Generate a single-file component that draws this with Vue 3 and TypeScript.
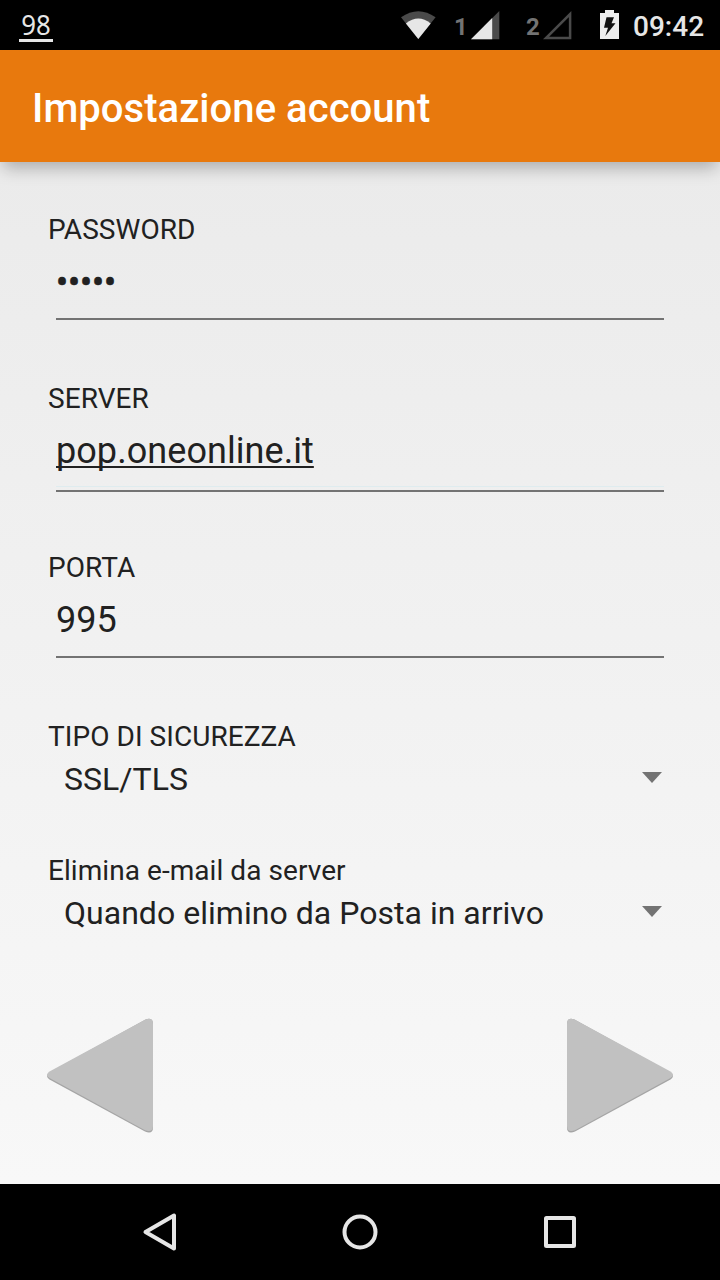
<script setup lang="ts">
interface FormField {
  id: string
  label: string
  value: string
}

const textFields: FormField[] = [
  { id: 'password', label: 'PASSWORD', value: '•••••' },
  { id: 'server', label: 'SERVER', value: 'pop.oneonline.it' },
  { id: 'port', label: 'PORTA', value: '995' },
]

const selectFields: FormField[] = [
  { id: 'security', label: 'TIPO DI SICUREZZA', value: 'SSL/TLS' },
  { id: 'delete', label: 'Elimina e-mail da server', value: 'Quando elimino da Posta in arrivo' },
]
</script>

<template>
  <div class="screen">
    <header class="status">
      <span class="battery-level"><span class="digits">98</span></span>
      <div class="status-icons">
        <svg class="wifi" width="36" height="30" viewBox="0 0 36 30">
          <path d="M0 7.3Q17.3-4.7 34.6 7.3L17.3 29Z" fill="#4a4a4a" />
          <path d="M4.900 13.4Q17.3 3.4 29.700 13.4L17.3 29Z" fill="#e6e6e6" />
        </svg>
        <span class="sim sim-one">1</span>
        <svg class="signal" width="29" height="30" viewBox="0 0 29 30">
          <path d="M28.3 1V29.3H0Z" fill="#4a4a4a" />
          <path d="M21.2 8.1V29.3H0Z" fill="#e6e6e6" />
        </svg>
        <span class="sim sim-two">2</span>
        <svg class="signal" width="29" height="30" viewBox="0 0 29 30">
          <path d="M27.100 4V28.100H3Z" fill="none" stroke="#4a4a4a" stroke-width="2.500" />
        </svg>
        <svg class="battery" width="19" height="30" viewBox="0 0 19 30">
          <path d="M5 0h9v3h5v26H0V3h5Z" fill="#ededed" />
          <path d="M6.500 7.300H14L11.500 13.200H15.500L5.300 26 8 17.700H4Z" fill="#111" />
        </svg>
        <span class="clock">09:42</span>
      </div>
    </header>

    <div class="appbar"><h1>Impostazione account</h1></div>

    <main class="form">
      <div v-for="field in textFields" :key="field.id" class="field" :class="field.id">
        <div class="label">{{ field.label }}</div>
        <div class="input"><span>{{ field.value }}</span></div>
      </div>
      <div v-for="field in selectFields" :key="field.id" class="select">
        <div class="label">{{ field.label }}</div>
        <div class="choice">
          <span>{{ field.value }}</span>
          <svg width="20" height="11" viewBox="0 0 20 11"><path d="M0 0H20L10 11Z" fill="#737373" /></svg>
        </div>
      </div>
      <div class="pager">
        <svg width="108" height="117" viewBox="0 0 108 117">
          <path d="M3.5 55.5Q-1.5 59 3.5 62.4L99 114.6Q107 117.500 107 110.500V7Q107 0 99.500 2.500Z" fill="#a5a5a5" />
          <path d="M3.500 54.500Q-1.500 58 3.500 61L99 113.300Q107 116 107 109V7Q107 0 99.500 2.500Z" fill="#c1c1c1" />
        </svg>
        <svg width="108" height="117" viewBox="0 0 108 117">
          <path d="M104.5 55.5Q109.5 59 104.5 62.4L9 114.600Q1 117.500 1 110.500V7Q1 0 8.500 2.500Z" fill="#a5a5a5" />
          <path d="M104.500 54.500Q109.500 58 104.500 61L9 113.300Q1 116 1 109V7Q1 0 8.500 2.500Z" fill="#c1c1c1" />
        </svg>
      </div>
    </main>

    <nav class="navbar">
      <svg width="40" height="40" viewBox="0 0 40 40">
        <path d="M5.500 20L34 3.500V36.500Z" />
      </svg>
      <svg width="40" height="40" viewBox="0 0 40 40">
        <circle cx="20" cy="20" r="15.500" />
      </svg>
      <svg width="40" height="40" viewBox="0 0 40 40">
        <rect x="6" y="6" width="28" height="28" rx="0.500" />
      </svg>
    </nav>
  </div>
</template>

<style>
html,
body {
  margin: 0;
  background: #000;
}
</style>

<style scoped>
.screen {
  display: flex;
  flex-direction: column;
  width: 720px;
  height: 1280px;
  overflow: hidden;
  font-family: Roboto, sans-serif;
  color: #212121;
}
svg {
  display: block;
  flex: none;
}
.status {
  display: flex;
  justify-content: space-between;
  align-items: flex-start;
  height: 50px;
  flex: none;
  background: #000;
  color: #e6e6e6;
}
.battery-level {
  box-sizing: border-box;
  width: 34px;
  height: 33px;
  margin: 9px 0 0 19px;
  border-bottom: 3px solid #e6e6e6;
  text-align: center;
  font: 28px/30px "Noto Sans", sans-serif;
}
.digits {
  display: block;
  transform: scaleX(0.92);
}
.status-icons {
  display: flex;
  padding: 10px 16px 0 0;
}
.sim {
  font-size: 24px;
  font-weight: 700;
  line-height: 34px;
  color: #737373;
  width: 17px;
}
.sim-one {
  margin-left: 17px;
}
.sim-two {
  margin-left: 26px;
}
.battery {
  margin-left: 28px;
}
.clock {
  width: 71px;
  margin-left: 14px;
  font-size: 28px;
  font-weight: 500;
  line-height: 33px;
  white-space: nowrap;
}
.appbar {
  position: relative;
  z-index: 1;
  flex: none;
  height: 112px;
  background: #e8790d;
  box-shadow: 0 9px 16px -3px rgba(0, 0, 0, 0.27);
}
h1 {
  margin: 0;
  padding-left: 32px;
  color: #fff;
  font-size: 40px;
  font-weight: 500;
  line-height: 118px;
  letter-spacing: 0.05px;
}
.form {
  box-sizing: border-box;
  flex: 1;
  padding: 51px 46px 0 48px;
  background: linear-gradient(#ebebeb, #f8f8f8);
}
.field {
  height: 169px;
}
.label {
  font-size: 28px;
  line-height: 34px;
  letter-spacing: 0.06px;
}
.input {
  box-sizing: border-box;
  width: 608px;
  height: 62px;
  margin: 14px 0 0 8px;
  border-bottom: 2px solid #737373;
  font-size: 36px;
  line-height: 42px;
}
.password .input {
  height: 59px;
  line-height: 44px;
  letter-spacing: -0.15px;
}
.password .input span {
  -webkit-text-stroke: 0.6px #212121;
}
.server .input {
  background: linear-gradient(#dfecef, #dfecef) 0 56px / 100% 1px no-repeat;
  letter-spacing: 0.06px;
}
.server .input span {
  text-decoration: underline;
  text-decoration-thickness: 2px;
  text-underline-offset: 3px;
  text-decoration-skip-ink: none;
}
.port .input {
  height: 59px;
}
.select {
  height: 134px;
}
.choice {
  display: flex;
  justify-content: space-between;
  align-items: center;
  height: 38px;
  margin-top: 6px;
  padding: 0 12px 0 16px;
  font-size: 32px;
  line-height: 38px;
  letter-spacing: 0.03px;
}
.choice svg {
  margin-bottom: 3px;
}
.pager {
  display: flex;
  justify-content: space-between;
  margin: 29px 0 0 -2px;
}
.navbar {
  display: flex;
  justify-content: space-between;
  align-items: center;
  flex: none;
  height: 96px;
  padding: 0 140px;
  background: #000;
}
.navbar svg {
  fill: none;
  stroke: #e6e6e6;
  stroke-width: 4;
  stroke-linejoin: round;
}
</style>
